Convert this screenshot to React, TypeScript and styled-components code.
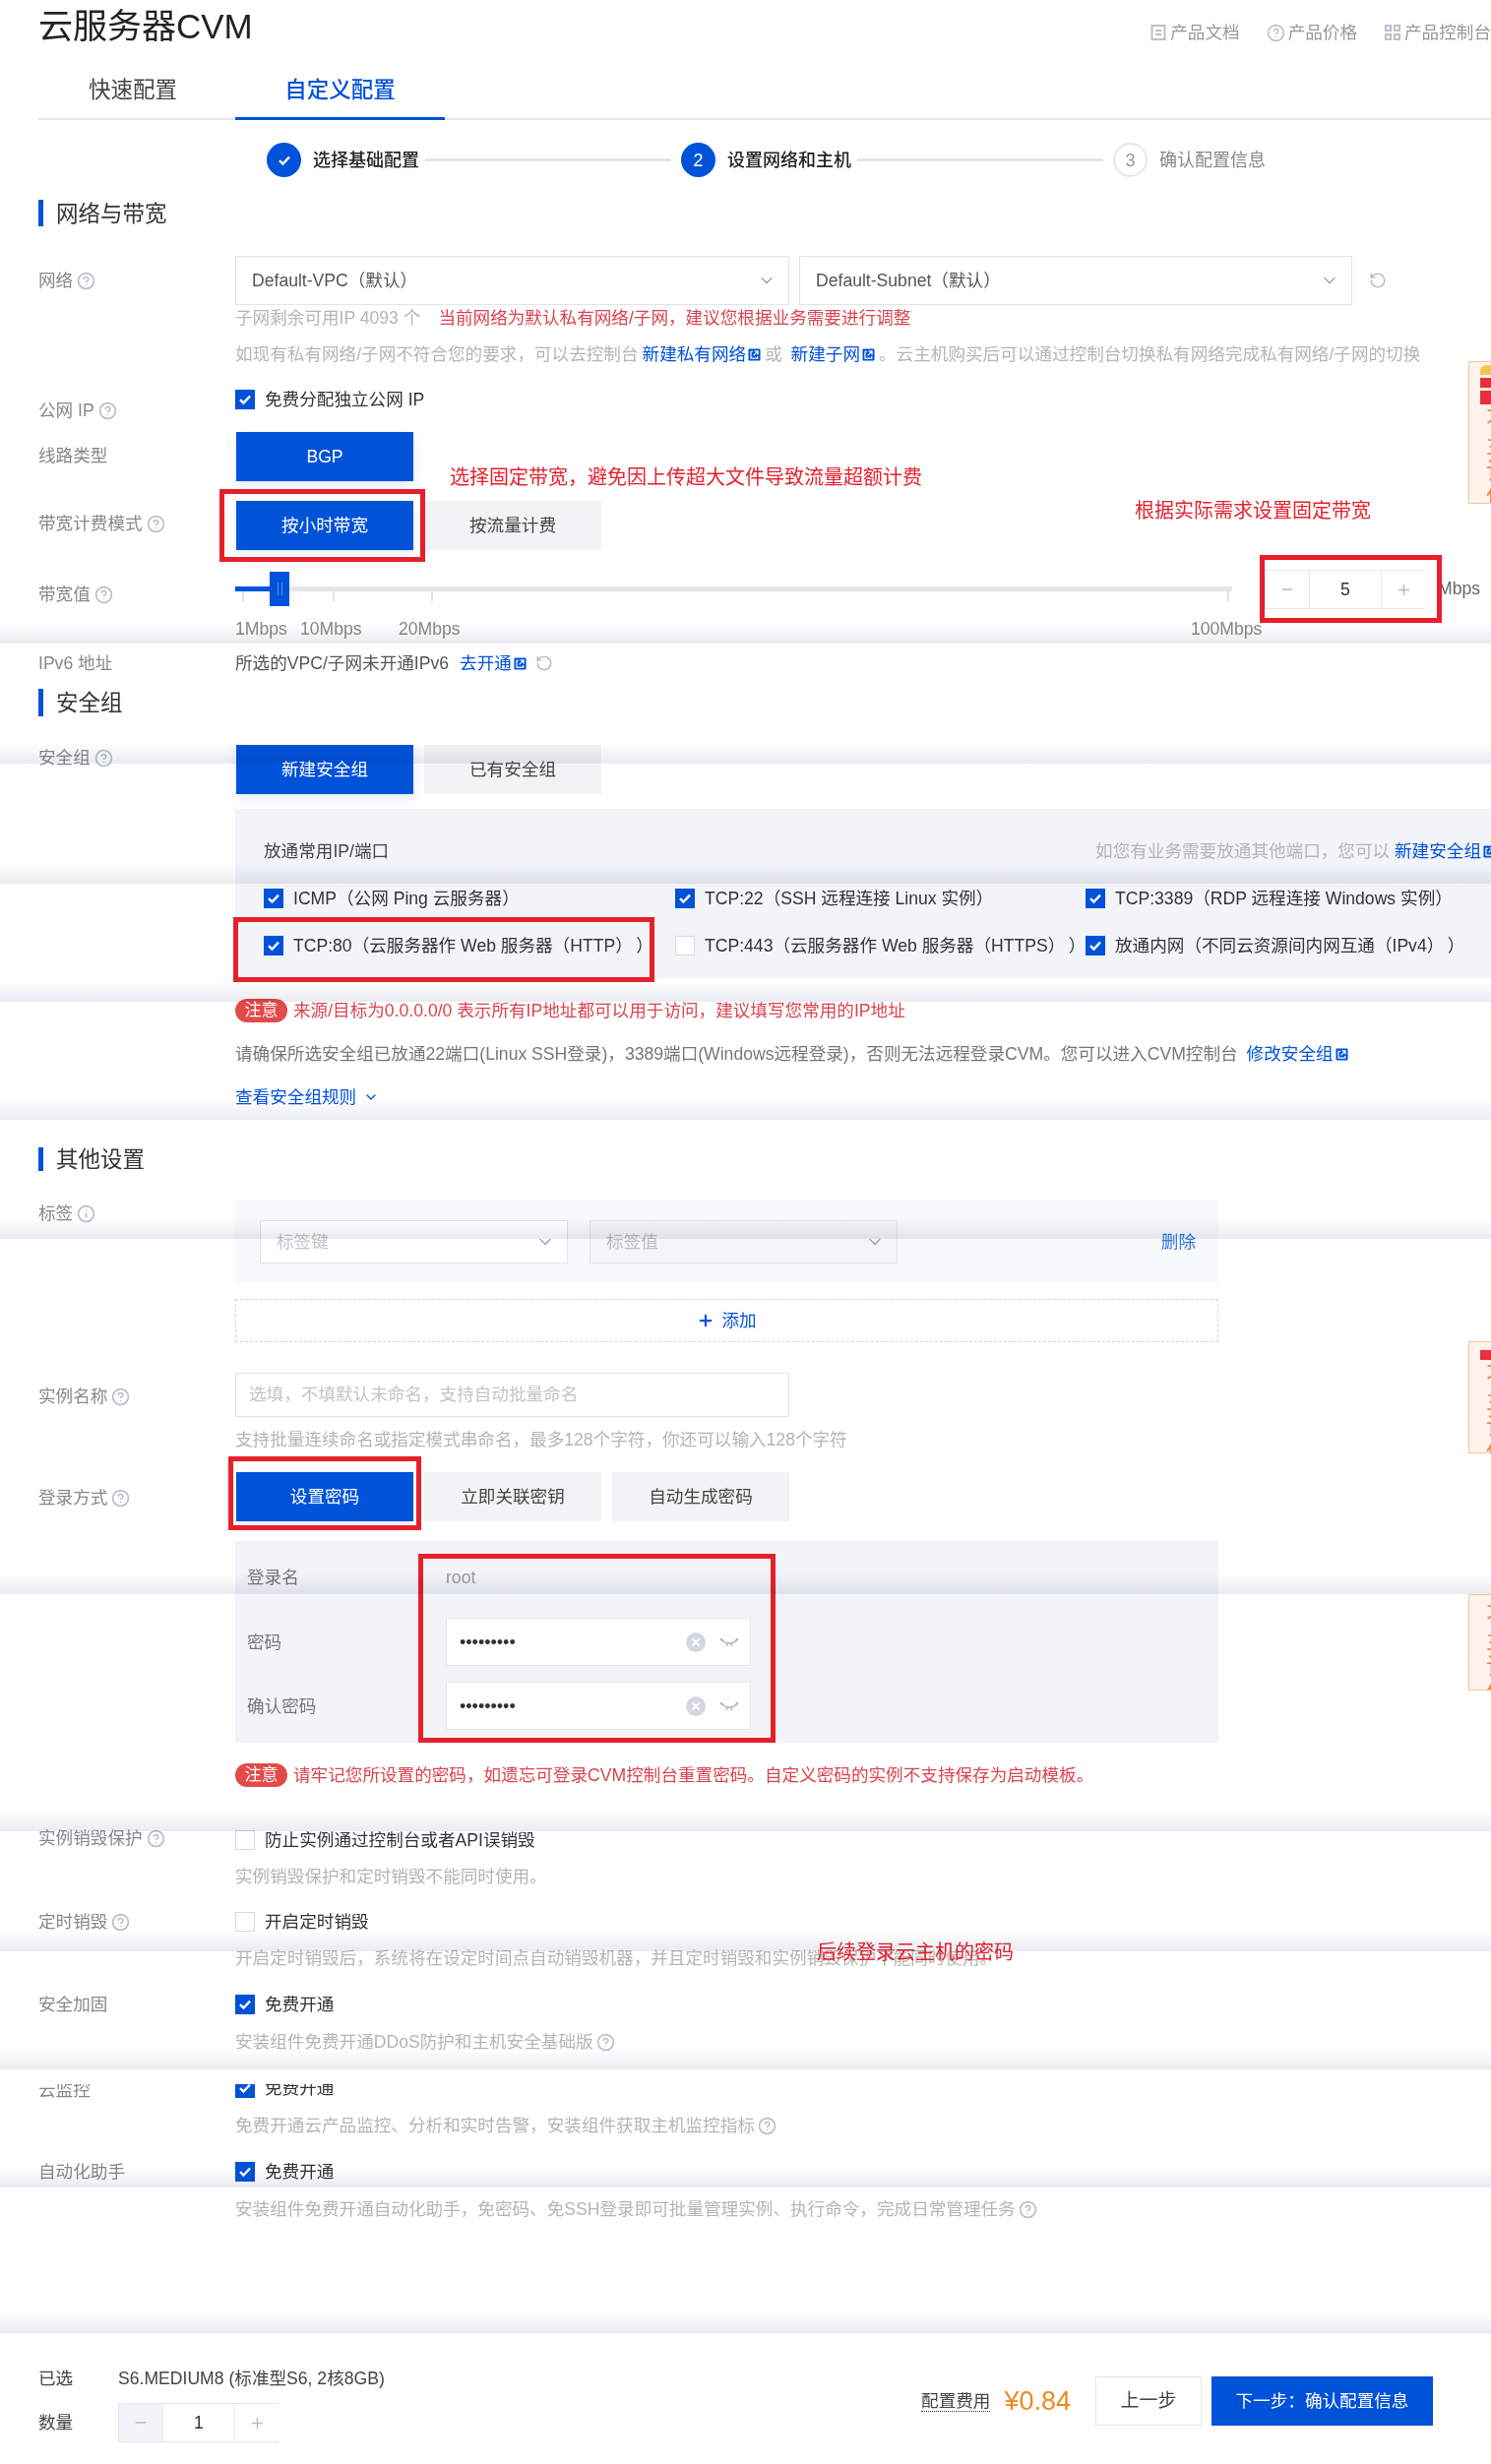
import React from 'react';
import styled, { createGlobalStyle } from 'styled-components';
import { ChevronDown, CircleHelp, Info, Minus, Plus, RotateCcw } from 'lucide-react';

const GlobalStyle = createGlobalStyle`
  html, body {
    margin: 0;
    padding: 0;
    background: #fff;
  }
  body {
    font-family: "Liberation Sans", "Noto Sans CJK SC", sans-serif;
    font-size: 17.6px;
    line-height: 26px;
    color: #444;
  }
`;

const Page = styled.div`
  position: relative;
  width: 1515px;
  height: 2504px;
  padding-left: 39px;
  box-sizing: border-box;
  overflow: hidden;
`;

/* the picture is stitched from several captures, each join leaves a soft band */
const Seam = styled.div<{ $top: number }>`
  position: absolute;
  left: 0;
  right: 0;
  top: ${p => p.$top - 20}px;
  height: 21px;
  background: linear-gradient(#fff, #e9ebf1);
  mix-blend-mode: multiply;
  pointer-events: none;
  z-index: 5;
`;

const SeamMask = styled.div`
  position: absolute;
  left: 0;
  right: 0;
  top: 2103px;
  height: 15px;
  background: #fff;
  z-index: 4;
`;

const SidePromo = styled.div<{ $top: number; $height: number }>`
  position: absolute;
  left: 1492px;
  top: ${p => p.$top}px;
  width: 30px;
  height: ${p => p.$height}px;
  box-sizing: border-box;
  padding: 8px 0 0 17px;
  background: #fff3ec;
  border: 1px solid #f0c79c;
  overflow: hidden;
  color: #ee8a3a;
  font-size: 24px;
  line-height: 26px;
  z-index: 4;
`;

const GiftTop = styled.div`
  width: 16px;
  height: 10px;
  margin: -5px 0 3px -6px;
  border-radius: 50% 50% 0 0;
  background: #f3c64e;
`;

const GiftBox = styled.div<{ $h: number }>`
  width: 20px;
  height: ${p => p.$h}px;
  margin: 0 0 3px -6px;
  background: #ee2d3c;
`;

const Header = styled.header`
  display: flex;
  justify-content: space-between;
  align-items: center;
  height: 54px;
  margin-bottom: 8px;
`;

const Title = styled.h1`
  margin: 0;
  font-size: 35px;
  font-weight: 400;
  line-height: 54px;
  color: #222;
`;

const HeaderLinks = styled.nav`
  display: flex;
  gap: 27px;
  margin-top: 12px;
`;

const HeaderLink = styled.span`
  display: flex;
  align-items: center;
  gap: 3px;
  color: #999;
`;

const Tabs = styled.div`
  display: flex;
  height: 60px;
  box-sizing: border-box;
  border-bottom: 2px solid #e8e8e8;
`;

const Tab = styled.div<{ $active?: boolean }>`
  width: ${p => (p.$active ? 213 : 200)}px;
  height: 60px;
  box-sizing: border-box;
  padding-left: ${p => (p.$active ? 0 : 51)}px;
  text-align: ${p => (p.$active ? 'center' : 'left')};
  font-size: 22.5px;
  line-height: 60px;
  font-weight: ${p => (p.$active ? 500 : 400)};
  color: ${p => (p.$active ? '#0052d9' : '#444')};
  border-bottom: ${p => (p.$active ? '3px solid #0052d9' : 'none')};
`;

const Steps = styled.div`
  display: flex;
  align-items: center;
  height: 35px;
  margin: 23px 0 23px 232px;
`;

const StepDot = styled.span<{ $on?: boolean }>`
  display: flex;
  align-items: center;
  justify-content: center;
  flex: none;
  width: 35px;
  height: 35px;
  margin-right: 12px;
  box-sizing: border-box;
  border-radius: 50%;
  font-size: 18px;
  background: ${p => (p.$on ? '#0052d9' : '#fff')};
  color: ${p => (p.$on ? '#fff' : '#999')};
  border: ${p => (p.$on ? 'none' : '2px solid #e4e6ea')};
`;

const StepText = styled.span<{ $on?: boolean }>`
  font-size: 18px;
  font-weight: ${p => (p.$on ? 500 : 400)};
  color: ${p => (p.$on ? '#222' : '#888')};
`;

const StepLine = styled.span`
  width: 250px;
  height: 3px;
  margin: 0 10px 0 6px;
  background: #e5e5e5;
`;

const SectionTitle = styled.h2<{ $mt?: number; $h: number }>`
  margin: ${p => p.$mt || 0}px 0 0;
  height: ${p => p.$h}px;
  padding-left: 13px;
  border-left: 5px solid #0052d9;
  font-size: 22.5px;
  font-weight: 400;
  line-height: ${p => p.$h + 2}px;
  color: #333;
`;

const Row = styled.div<{ $mt?: number }>`
  position: relative;
  display: grid;
  grid-template-columns: 200px 1fr;
  margin-top: ${p => p.$mt || 0}px;
`;

/* the label never adds height to its row, the control decides that */
const RowLabel = styled.div<{ $top?: number }>`
  display: flex;
  align-items: center;
  gap: 4px;
  height: 26px;
  margin-top: ${p => p.$top || 0}px;
  margin-bottom: ${p => -26 - (p.$top || 0)}px;
  color: #888;
`;

const HelpIcon = styled(CircleHelp).attrs({ size: 19, strokeWidth: 2 })`
  color: #b5bcc9;
  flex: none;
`;

const InfoIcon = styled(Info).attrs({ size: 19, strokeWidth: 2 })`
  color: #b5bcc9;
  flex: none;
`;

const SelectBox = styled.div<{ $w: number; $h: number; $muted?: boolean }>`
  display: flex;
  align-items: center;
  justify-content: space-between;
  width: ${p => p.$w}px;
  height: ${p => p.$h}px;
  box-sizing: border-box;
  padding: 0 12px 0 16px;
  border: 1px solid #e0e3e9;
  background: ${p => (p.$muted ? '#f4f5f8' : '#fff')};
  color: ${p => (p.$muted ? '#bbb' : '#555')};
`;

const SelectRow = styled.div<{ $gap: number }>`
  display: flex;
  align-items: center;
  gap: ${p => p.$gap}px;
`;

const Chevron = styled(ChevronDown).attrs({ size: 20, strokeWidth: 1.5 })`
  color: #9aa0ab;
  flex: none;
`;

const Refresh = styled(RotateCcw).attrs({ size: 18, strokeWidth: 1.6 })<{ $ml?: number }>`
  color: #a9afb9;
  margin-left: ${p => p.$ml ?? 7}px;
  flex: none;
`;

const Help = styled.div<{ $mt?: number }>`
  position: relative;
  display: flex;
  align-items: center;
  gap: 3px;
  margin-top: ${p => p.$mt || 0}px;
  color: #b5b5b5;
  white-space: nowrap;
`;

const Warn = styled.span`
  margin-left: 15px;
  color: #d9444f;
`;

const LinkText = styled.a<{ $gap?: number }>`
  display: inline-flex;
  align-items: center;
  gap: 2px;
  margin: 0 ${p => p.$gap ?? 4}px;
  color: #0052d9;
`;

const Dark = styled.span`
  color: #555;
`;

const CheckRow = styled.label<{ $mt?: number }>`
  display: flex;
  align-items: center;
  gap: 10px;
  height: 20px;
  margin-top: ${p => p.$mt || 0}px;
  color: #333;
  white-space: nowrap;
`;

const Box = styled.span<{ $on?: boolean }>`
  display: flex;
  align-items: center;
  justify-content: center;
  flex: none;
  width: 20px;
  height: 20px;
  box-sizing: border-box;
  background: ${p => (p.$on ? '#0052d9' : '#fff')};
  border: ${p => (p.$on ? 'none' : '1px solid #d5d8de')};
`;

const ButtonRow = styled.div`
  display: flex;
  gap: 11px;
  padding-left: 1px;
`;

const Choice = styled.div<{ $on?: boolean }>`
  width: 180px;
  height: 50px;
  background: ${p => (p.$on ? '#0052d9' : '#f2f3f5')};
  color: ${p => (p.$on ? '#fff' : '#444')};
  text-align: center;
  line-height: 50px;
  box-shadow: ${p => (p.$on ? '0 4px 10px rgba(0, 82, 217, 0.12)' : 'none')};
`;

const Boxed = styled.div`
  position: relative;
`;

const RedBox = styled.div<{ $l: number; $t: number; $r: number; $b: number }>`
  position: absolute;
  left: ${p => p.$l}px;
  top: ${p => p.$t}px;
  right: ${p => p.$r}px;
  bottom: ${p => p.$b}px;
  border: 5px solid #e71f2a;
  pointer-events: none;
  z-index: 2;
`;

const Annotation = styled.span<{ $l: number; $t: number }>`
  position: absolute;
  left: ${p => p.$l}px;
  top: ${p => p.$t}px;
  font-size: 20px;
  color: #e71f2a;
  white-space: nowrap;
  z-index: 5;
`;

const SliderArea = styled.div`
  display: flex;
  align-items: flex-start;
`;

const SliderCol = styled.div`
  width: 1046px;
  flex: none;
`;

const TrackWrap = styled.div`
  position: relative;
  width: 1013px;
  height: 22px;
  box-sizing: border-box;
  padding-top: 17px;
`;

const Track = styled.div`
  height: 5px;
  background: #e4e6ea;
`;

const TrackFill = styled.div`
  width: 36px;
  height: 5px;
  background: #0052d9;
`;

const Handle = styled.div`
  position: absolute;
  left: 35px;
  top: 2px;
  display: flex;
  justify-content: center;
  align-items: center;
  gap: 3px;
  width: 20px;
  height: 35px;
  background: #0052d9;
`;

const HandleGrip = styled.i`
  width: 1px;
  height: 13px;
  background: #5d8fe6;
`;

const TickRow = styled.div`
  display: flex;
  height: 10px;
  padding-left: 7px;
`;

const Tick = styled.span<{ $w: number }>`
  flex: none;
  width: ${p => p.$w}px;
  height: 10px;

  &::before {
    content: '';
    display: block;
    width: 2px;
    height: 10px;
    background: #e0e2e6;
  }
`;

const ScaleRow = styled.div`
  display: flex;
  margin-top: 15px;
  color: #888;
`;

const ScaleItem = styled.span<{ $w: number }>`
  flex: none;
  width: ${p => p.$w}px;
`;

const Stepper = styled.div`
  display: grid;
  grid-template-columns: 44px 74px 45px;
  width: 163px;
  height: 40px;
  box-sizing: border-box;
  border: 1px solid #e5e8ee;
  background: #fff;
  text-align: center;
  line-height: 38px;
  color: #333;
`;

const StepBtn = styled.span<{ $gray?: boolean }>`
  display: flex;
  align-items: center;
  justify-content: center;
  background: ${p => (p.$gray ? '#f2f4f8' : '#fff')};
  color: #b6bcc7;
`;

const StepValue = styled.span`
  border-left: 1px solid #e5e8ee;
  border-right: 1px solid #e5e8ee;
`;

const Unit = styled.span`
  margin: 6px 0 0 13px;
  color: #666;
`;

const Panel = styled.div<{ $mt?: number; $tone?: string; $pad: string; $w?: number }>`
  position: relative;
  width: ${p => (p.$w ? `${p.$w}px` : 'auto')};
  margin-top: ${p => p.$mt || 0}px;
  padding: ${p => p.$pad};
  background: ${p => p.$tone || '#f2f4f8'};
`;

const Indent = styled.div`
  margin-left: 200px;
`;

const WideIndent = styled(Indent)`
  width: 999px;
`;

const PanelHead = styled.div`
  display: flex;
  justify-content: space-between;
  white-space: nowrap;
  color: #444;
`;

const PanelHint = styled.span`
  color: #b5b5b5;
  margin-right: -5px;
`;

const PortGrid = styled.div`
  display: grid;
  grid-template-columns: 418px 417px 1fr;
  row-gap: 28px;
  margin-top: 25px;
`;

const PortCell = styled.div`
  position: relative;
`;

const Note = styled.div<{ $mt?: number }>`
  display: flex;
  align-items: center;
  gap: 6px;
  height: 24px;
  margin-top: ${p => p.$mt || 0}px;
  color: #d9444f;
`;

const NoteBadge = styled.span`
  width: 53px;
  height: 24px;
  border-radius: 12px;
  background: #e34a4a;
  color: #fff;
  font-size: 17px;
  line-height: 24px;
  text-align: center;
`;

const PlainLine = styled.div<{ $mt?: number }>`
  margin-top: ${p => p.$mt || 0}px;
  color: #777;
  white-space: nowrap;
`;

const RuleLink = styled.a`
  display: flex;
  align-items: center;
  gap: 7px;
  margin-top: 18px;
  color: #0052d9;
`;

const TagRow = styled.div`
  display: flex;
  align-items: center;
  justify-content: space-between;
`;

const TagPlaceholder = styled.span`
  color: #c4c4c4;
`;

const DeleteLink = styled.span`
  color: #0052d9;
  opacity: 0.8;
`;

const AddButton = styled.div`
  display: flex;
  align-items: center;
  justify-content: center;
  gap: 7px;
  height: 44px;
  box-sizing: border-box;
  margin-top: 16px;
  border: 1px dashed #d5d5d5;
  color: #0052d9;
`;

const TextInput = styled.div`
  width: 563px;
  height: 45px;
  box-sizing: border-box;
  padding-left: 13px;
  border: 1px solid #e0e3e9;
  line-height: 43px;
  color: #c4c4c4;
`;

const CredRow = styled.div<{ $mt?: number }>`
  display: grid;
  grid-template-columns: 202px 310px;
  align-items: center;
  margin-top: ${p => p.$mt || 0}px;
  color: #777;
`;

const RootName = styled.span`
  color: #999;
`;

const PasswordBox = styled.div`
  display: flex;
  align-items: center;
  height: 49px;
  box-sizing: border-box;
  padding: 0 11px 0 13px;
  background: #fff;
  border: 1px solid #e6e8ee;
  color: #333;
`;

const Dots = styled.span`
  flex: 1;
  font-size: 18px;
`;

const Footer = styled.footer`
  display: flex;
  justify-content: space-between;
  align-items: flex-start;
  margin-top: 112px;
  padding: 34px 59px 0 0;
`;

const FooterLine = styled.div<{ $mt?: number }>`
  display: grid;
  grid-template-columns: 81px auto;
  align-items: center;
  margin-top: ${p => p.$mt || 0}px;
  color: #444;
`;

const Actions = styled.div`
  display: flex;
  align-items: center;
  margin-top: 11px;
`;

const CostLabel = styled.span`
  margin-right: 14px;
  border-bottom: 1px dotted #333;
  line-height: 20px;
  color: #444;
`;

const Cost = styled.span`
  margin-right: 25px;
  font-size: 27px;
  color: #ee8a1e;
`;

const PrevButton = styled.div`
  width: 108px;
  height: 50px;
  box-sizing: border-box;
  border: 1px solid #e3e5ea;
  text-align: center;
  line-height: 48px;
  font-size: 19px;
  color: #444;
`;

const NextButton = styled.div`
  width: 225px;
  height: 50px;
  margin-left: 10px;
  background: #0052d9;
  text-align: center;
  line-height: 50px;
  color: #fff;
`;

const Tick14 = () => (
  <svg width="14" height="12" viewBox="0 0 14 12" fill="none">
    <path d="M2 6.2 5.4 9.6 12 2.6" stroke="#fff" strokeWidth="2.4" />
  </svg>
);

const External = () => (
  <svg width="13" height="13" viewBox="0 0 14 14">
    <rect x="0.5" y="0.5" width="13" height="13" rx="1" fill="#0052d9" />
    <path d="M5.5 3.5H3.2v7.3h7.3V8.5M7 3.2h3.8V7M10.6 3.4 6 8" fill="none" stroke="#fff" strokeWidth="1.3" />
  </svg>
);

const DocIcon = () => (
  <svg width="18" height="18" viewBox="0 0 18 18" fill="none" stroke="#b9c0cc" strokeWidth="2">
    <path d="M2.5 2h13v14h-13zM6 7h6M6 11h6" />
  </svg>
);

const GridIcon = () => (
  <svg width="18" height="18" viewBox="0 0 18 18" fill="none" stroke="#b9c0cc" strokeWidth="2.2">
    <path d="M2 2h5v5H2zM11 2h5v5h-5zM2 11h5v5H2zM11 11h5v5h-5z" />
  </svg>
);

const ClearIcon = () => (
  <svg width="20" height="20" viewBox="0 0 20 20">
    <circle cx="10" cy="10" r="10" fill="#d3d7e2" />
    <path d="M6.5 6.5l7 7M13.5 6.5l-7 7" stroke="#fff" strokeWidth="2" />
  </svg>
);

const EyeSvg = styled.svg`
  margin-left: 14px;
`;

const EyeOffIcon = () => (
  <EyeSvg width="20" height="12" viewBox="0 0 20 12" fill="none" stroke="#aeb3bd" strokeWidth="1.4">
    <path d="M1 2.5C4 6 7 7 10 7s6-1 9-4.5M4 5 2 2.5M16 5l2-2.5M8 7l-.6 3M12 7l.6 3" />
  </EyeSvg>
);

const Check = ({ on, children, mt }: { on?: boolean; children: React.ReactNode; mt?: number }) => (
  <CheckRow $mt={mt}>
    <Box $on={on}>{on && <Tick14 />}</Box>
    <span>{children}</span>
  </CheckRow>
);

const seams = [653, 775, 897, 1017, 1137, 1258, 1619, 1860, 1982, 2102, 2222, 2370];

export default function App() {
  return (
    <Page>
      <GlobalStyle />
      <Header>
        <Title>云服务器CVM</Title>
        <HeaderLinks>
          <HeaderLink><DocIcon />产品文档</HeaderLink>
          <HeaderLink><CircleHelp size={19} strokeWidth={2} color="#b9c0cc" />产品价格</HeaderLink>
          <HeaderLink><GridIcon />产品控制台</HeaderLink>
        </HeaderLinks>
      </Header>

      <Tabs>
        <Tab>快速配置</Tab>
        <Tab $active>自定义配置</Tab>
      </Tabs>

      <Steps>
        <StepDot $on><Tick14 /></StepDot>
        <StepText $on>选择基础配置</StepText>
        <StepLine />
        <StepDot $on>2</StepDot>
        <StepText $on>设置网络和主机</StepText>
        <StepLine />
        <StepDot>3</StepDot>
        <StepText>确认配置信息</StepText>
      </Steps>

      <SectionTitle $h={27}>网络与带宽</SectionTitle>

      <Row $mt={30}>
        <RowLabel $top={12}>网络<HelpIcon /></RowLabel>
        <SelectRow $gap={10}>
          <SelectBox $w={563} $h={50}>Default-VPC（默认）<Chevron /></SelectBox>
          <SelectBox $w={562} $h={50}>Default-Subnet（默认）<Chevron /></SelectBox>
          <Refresh />
        </SelectRow>
      </Row>
      <Indent>
        <Help>子网剩余可用IP 4093 个<Warn>当前网络为默认私有网络/子网，建议您根据业务需要进行调整</Warn></Help>
        <Help $mt={11}>
          <span>
            如现有私有网络/子网不符合您的要求，可以去控制台
            <LinkText $gap={4}>新建私有网络<External /></LinkText>
            或
            <LinkText $gap={4}>&nbsp;新建子网<External /></LinkText>
            。云主机购买后可以通过控制台切换私有网络完成私有网络/子网的切换
          </span>
        </Help>
      </Indent>

      <Row $mt={23}>
        <RowLabel $top={8}>公网 IP<HelpIcon /></RowLabel>
        <Check on>免费分配独立公网 IP</Check>
      </Row>

      <Row $mt={23}>
        <RowLabel $top={11}>线路类型</RowLabel>
        <ButtonRow><Choice $on>BGP</Choice></ButtonRow>
        <Annotation $l={418} $t={33}>选择固定带宽，避免因上传超大文件导致流量超额计费</Annotation>
      </Row>

      <Row $mt={20}>
        <RowLabel $top={10}>带宽计费模式<HelpIcon /></RowLabel>
        <ButtonRow>
          <Boxed>
            <Choice $on>按小时带宽</Choice>
            <RedBox $l={-17} $t={-12} $r={-12} $b={-12} />
          </Boxed>
          <Choice>按流量计费</Choice>
        </ButtonRow>
        <Annotation $l={1114} $t={-3}>根据实际需求设置固定带宽</Annotation>
      </Row>

      <Row $mt={20}>
        <RowLabel $top={12}>带宽值<HelpIcon /></RowLabel>
        <SliderArea>
          <SliderCol>
            <TrackWrap>
              <Track><TrackFill /></Track>
              <Handle><HandleGrip /><HandleGrip /></Handle>
            </TrackWrap>
            <TickRow>
              <Tick $w={92} />
              <Tick $w={100} />
              <Tick $w={809} />
              <Tick $w={2} />
            </TickRow>
            <ScaleRow>
              <ScaleItem $w={66}>1Mbps</ScaleItem>
              <ScaleItem $w={100}>10Mbps</ScaleItem>
              <ScaleItem $w={805}>20Mbps</ScaleItem>
              <ScaleItem $w={75}>100Mbps</ScaleItem>
            </ScaleRow>
          </SliderCol>
          <Boxed>
            <Stepper>
              <StepBtn><Minus size={16} strokeWidth={2.5} /></StepBtn>
              <StepValue>5</StepValue>
              <StepBtn><Plus size={17} strokeWidth={2} /></StepBtn>
            </Stepper>
            <RedBox $l={-5} $t={-15} $r={-17} $b={-14} />
          </Boxed>
          <Unit>Mbps</Unit>
        </SliderArea>
      </Row>

      <Row $mt={9}>
        <RowLabel>IPv6 地址</RowLabel>
        <Help>
          <Dark>所选的VPC/子网未开通IPv6</Dark>
          <LinkText $gap={8}>去开通<External /></LinkText>
          <Refresh $ml={-2} />
        </Help>
      </Row>

      <SectionTitle $mt={13} $h={28}>安全组</SectionTitle>

      <Row $mt={29}>
        <RowLabel>安全组<HelpIcon /></RowLabel>
        <ButtonRow>
          <Choice $on>新建安全组</Choice>
          <Choice>已有安全组</Choice>
        </ButtonRow>
      </Row>

      <Indent>
        <Panel $mt={15} $pad="30px 0 23px 29px">
          <PanelHead>
            放通常用IP/端口
            <PanelHint>如您有业务需要放通其他端口，您可以<LinkText $gap={0}>&nbsp;新建安全组<External /></LinkText></PanelHint>
          </PanelHead>
          <PortGrid>
            <Check on>ICMP（公网 Ping 云服务器）</Check>
            <Check on>TCP:22（SSH 远程连接 Linux 实例）</Check>
            <Check on>TCP:3389（RDP 远程连接 Windows 实例）</Check>
            <PortCell>
              <Check on>TCP:80（云服务器作 Web 服务器（HTTP）&thinsp;）</Check>
              <RedBox $l={-31} $t={-19} $r={21} $b={-27} />
            </PortCell>
            <Check>TCP:443（云服务器作 Web 服务器（HTTPS）&thinsp;）</Check>
            <Check on>放通内网（不同云资源间内网互通（IPv4）&thinsp;）</Check>
          </PortGrid>
        </Panel>

        <Note $mt={21}>
          <NoteBadge>注意</NoteBadge>
          来源/目标为0.0.0.0/0 表示所有IP地址都可以用于访问，建议填写您常用的IP地址
        </Note>
        <PlainLine $mt={19}>
          请确保所选安全组已放通22端口(Linux SSH登录)，3389端口(Windows远程登录)，否则无法远程登录CVM。您可以进入CVM控制台
          <LinkText $gap={9}>修改安全组<External /></LinkText>
        </PlainLine>
        <RuleLink>查看安全组规则<ChevronDown size={16} strokeWidth={2} /></RuleLink>
      </Indent>

      <SectionTitle $mt={38} $h={24}>其他设置</SectionTitle>

      <Row $mt={30}>
        <RowLabel>标签<InfoIcon /></RowLabel>
        <Panel $tone="#f8f9fb" $pad="20px 23px 20px 25px" $w={951}>
          <TagRow>
            <SelectRow $gap={22}>
              <SelectBox $w={313} $h={44}><TagPlaceholder>标签键</TagPlaceholder><Chevron /></SelectBox>
              <SelectBox $w={313} $h={44} $muted>标签值<Chevron /></SelectBox>
            </SelectRow>
            <DeleteLink>删除</DeleteLink>
          </TagRow>
        </Panel>
      </Row>

      <WideIndent>
        <AddButton><Plus size={18} strokeWidth={3} />添加</AddButton>
      </WideIndent>

      <Row $mt={31}>
        <RowLabel $top={11}>实例名称<HelpIcon /></RowLabel>
        <TextInput>选填，不填默认未命名，支持自动批量命名</TextInput>
      </Row>
      <Indent>
        <Help $mt={10}>支持批量连续命名或指定模式串命名，最多128个字符，你还可以输入128个字符</Help>
      </Indent>

      <Row $mt={20}>
        <RowLabel $top={13}>登录方式<HelpIcon /></RowLabel>
        <ButtonRow>
          <Boxed>
            <Choice $on>设置密码</Choice>
            <RedBox $l={-8} $t={-16} $r={-8} $b={-9} />
          </Boxed>
          <Choice>立即关联密钥</Choice>
          <Choice>自动生成密码</Choice>
        </ButtonRow>
      </Row>

      <WideIndent>
        <Panel $mt={20} $pad="24px 0 13px 12px">
          <CredRow>登录名<RootName>root</RootName></CredRow>
          <CredRow $mt={28}>
            密码
            <PasswordBox><Dots>•••••••••</Dots><ClearIcon /><EyeOffIcon /></PasswordBox>
          </CredRow>
          <CredRow $mt={16}>
            确认密码
            <PasswordBox><Dots>•••••••••</Dots><ClearIcon /><EyeOffIcon /></PasswordBox>
          </CredRow>
          <RedBox $l={186} $t={13} $r={450} $b={0} />
        </Panel>
        <Note $mt={21}>
          <NoteBadge>注意</NoteBadge>
          请牢记您所设置的密码，如遗忘可登录CVM控制台重置密码。自定义密码的实例不支持保存为启动模板。
        </Note>
      </WideIndent>

      <Row $mt={44}>
        <RowLabel $top={-5}>实例销毁保护<HelpIcon /></RowLabel>
        <Check>防止实例通过控制台或者API误销毁</Check>
      </Row>
      <Indent><Help $mt={14}>实例销毁保护和定时销毁不能同时使用。</Help></Indent>

      <Row $mt={23}>
        <RowLabel $top={-3}>定时销毁<HelpIcon /></RowLabel>
        <Check>开启定时销毁</Check>
      </Row>
      <Indent>
        <Help $mt={14}>
          开启定时销毁后，系统将在设定时间点自动销毁机器，并且定时销毁和实例销毁保护不能同时使用。
          <Annotation $l={591} $t={-6}>后续登录云主机的密码</Annotation>
        </Help>
      </Indent>

      <Row $mt={24}>
        <RowLabel $top={-3}>安全加固</RowLabel>
        <Check on>免费开通</Check>
      </Row>
      <Indent><Help $mt={15}>安装组件免费开通DDoS防护和主机安全基础版<HelpIcon /></Help></Indent>

      <Row $mt={24}>
        <RowLabel $top={-1}>云监控</RowLabel>
        <Check on>免费开通</Check>
      </Row>
      <Indent><Help $mt={15}>免费开通云产品监控、分析和实时告警，安装组件获取主机监控指标<HelpIcon /></Help></Indent>

      <Row $mt={24}>
        <RowLabel $top={-3}>自动化助手</RowLabel>
        <Check on>免费开通</Check>
      </Row>
      <Indent><Help $mt={15}>安装组件免费开通自动化助手，免密码、免SSH登录即可批量管理实例、执行命令，完成日常管理任务<HelpIcon /></Help></Indent>

      <Footer>
        <div>
          <FooterLine>已选<span>S6.MEDIUM8 (标准型S6, 2核8GB)</span></FooterLine>
          <FooterLine $mt={12}>
            数量
            <Stepper>
              <StepBtn $gray><Minus size={16} strokeWidth={2.5} /></StepBtn>
              <StepValue>1</StepValue>
              <StepBtn><Plus size={17} strokeWidth={2} /></StepBtn>
            </Stepper>
          </FooterLine>
        </div>
        <Actions>
          <CostLabel>配置费用</CostLabel>
          <Cost>¥0.84</Cost>
          <PrevButton>上一步</PrevButton>
          <NextButton>下一步：确认配置信息</NextButton>
        </Actions>
      </Footer>

      {seams.map(top => <Seam key={top} $top={top} />)}
      <SeamMask />

      <SidePromo $top={367} $height={145}>
        <GiftTop />
        <GiftBox $h={10} />
        <GiftBox $h={14} />
        不<br />兰<br />论<br />低
      </SidePromo>
      <SidePromo $top={1363} $height={114}>
        <GiftBox $h={10} />
        不<br />兰<br />论<br />低
      </SidePromo>
      <SidePromo $top={1620} $height={98}>
        不<br />兰<br />论<br />低
      </SidePromo>
    </Page>
  );
}
